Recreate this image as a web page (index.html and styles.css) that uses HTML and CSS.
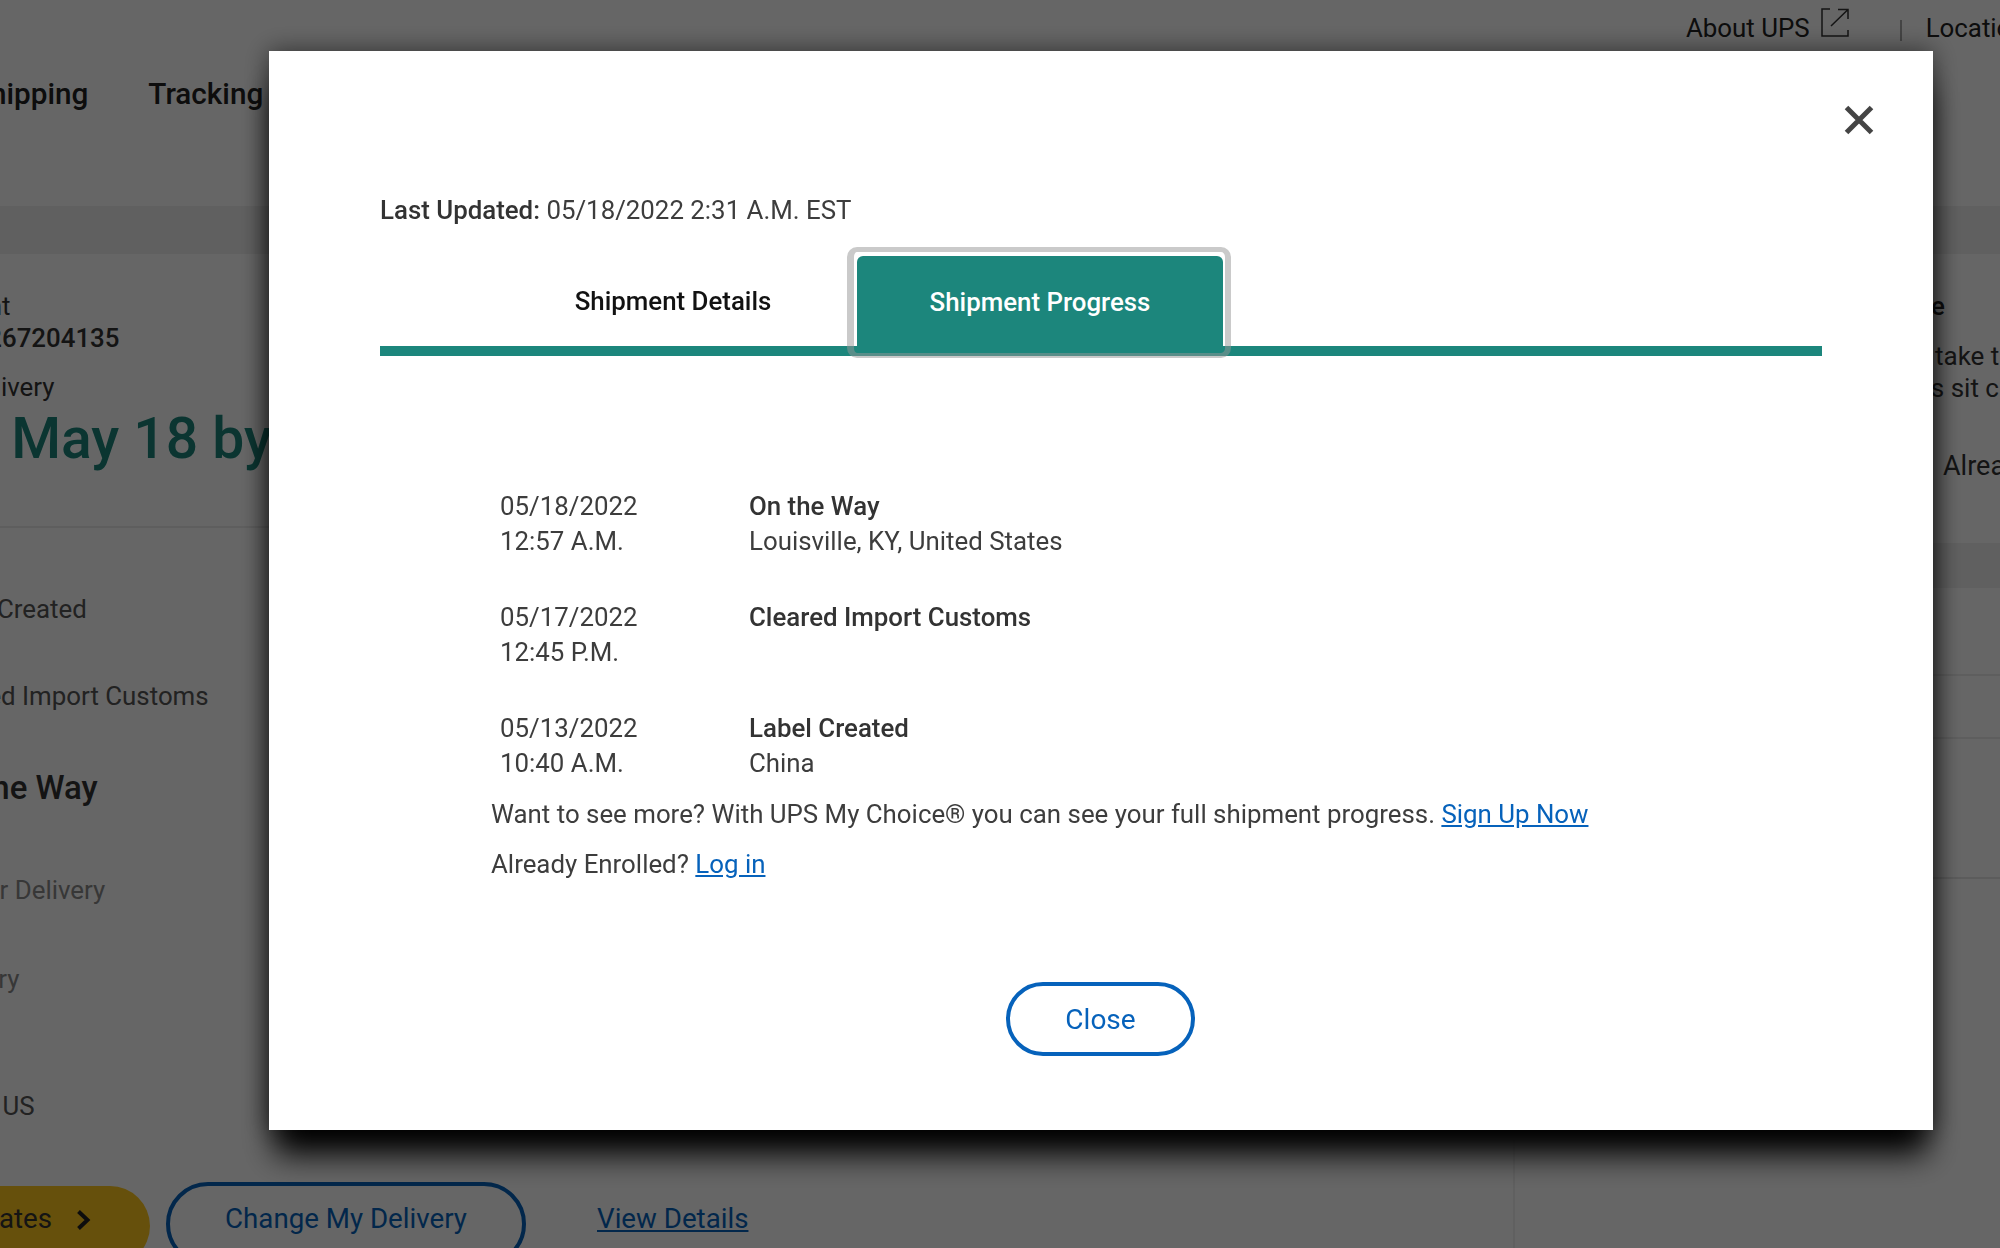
FILE: index.html
```html
<!DOCTYPE html>
<html lang="en">
<head>
<meta charset="utf-8">
<title>Shipment Progress</title>
<link rel="stylesheet" href="styles.css">
</head>
<body>
<div class="page">
  <header class="util">
    <span class="util-link">About UPS</span>
    <svg class="ext-icon" viewBox="0 0 28 29" aria-hidden="true"><path d="M9 1H1v27h26v-6M10 18 26.500 2M17 1.500h10V11" /></svg>
    <span class="util-sep"></span>
    <span class="util-link">Locations</span>
  </header>
  <nav class="nav">
    <span class="nav-item">Shipping</span>
    <span class="nav-item">Tracking</span>
  </nav>
  <div class="band"></div>
  <main class="content">
    <section class="left">
      <div class="summary">
        <p class="label">Shipment</p>
        <p class="number">1Z267204135</p>
        <p class="label label-gap">Delivery</p>
        <p class="eta">Wed May 18 by End of Day</p>
      </div>
      <ol class="steps">
        <li class="step step-created">Label Created</li>
        <li class="step step-customs">Cleared Import Customs</li>
        <li class="step step-way">On the Way</li>
        <li class="step step-muted step-out">Out for Delivery</li>
        <li class="step step-muted step-del">Delivery</li>
        <li class="step step-us">KY, US</li>
      </ol>
      <div class="actions">
        <span class="btn-yellow">Get Updates
          <svg class="chev" viewBox="0 0 15 22" aria-hidden="true"><path d="M2.500 2.500l9 8.500-9 8.500"/></svg>
        </span>
        <span class="btn-outline">Change My Delivery</span>
        <span class="view-link">View Details</span>
      </div>
    </section>
    <aside class="right">
      <div class="promo">
        <p class="promo-title">e</p>
        <p class="promo-text">take t</p>
        <p class="promo-text promo-text-second">es sit c</p>
        <p class="promo-foot">Already</p>
      </div>
      <div class="right-rows">
        <div class="rrow rrow-a"></div>
        <div class="rrow rrow-b"></div>
        <div class="rrow rrow-c"></div>
      </div>
    </aside>
  </main>
</div>

<div class="overlay">
  <div class="modal" role="dialog" aria-label="Shipment Progress">
    <svg class="close-x" viewBox="0 0 30 30" aria-label="Close"><path d="M2.500 2.500l25 25M27.500 2.500l-25 25"/></svg>
    <p class="updated"><strong>Last Updated:</strong> 05/18/2022 2:31 A.M. EST</p>
    <div class="tabs">
      <div class="tab">Shipment Details</div>
      <div class="tab tab-active">Shipment Progress</div>
    </div>
    <div class="history">
      <div class="row">
        <div>05/18/2022<br>12:57 A.M.</div>
        <div><strong>On the Way</strong><br>Louisville, KY, United States</div>
      </div>
      <div class="row">
        <div>05/17/2022<br>12:45 P.M.</div>
        <div><strong>Cleared Import Customs</strong></div>
      </div>
      <div class="row">
        <div>05/13/2022<br>10:40 A.M.</div>
        <div><strong>Label Created</strong><br>China</div>
      </div>
    </div>
    <p class="more">Want to see more? With UPS My Choice® you can see your full shipment progress. <a href="#">Sign Up Now</a></p>
    <p class="more more-second">Already Enrolled? <a href="#">Log in</a></p>
    <div class="modal-foot"><button class="close-btn" type="button">Close</button></div>
  </div>
</div>
</body>
</html>
```
FILE: styles.css
```css
* { box-sizing: border-box; }
html, body { margin: 0; padding: 0; height: 1248px; overflow: hidden; background: #fff; }
body { font-family: Roboto, "Liberation Sans", sans-serif; color: #333; font-size: 25.85px; }
p { margin: 0; }

.page { width: 2000px; height: 1248px; overflow: hidden; background: #fff; }

/* background page */
.util { height: 56px; display: flex; align-items: center; padding-left: 1686px; white-space: nowrap; color: #222; }
.util-link { line-height: 56px; flex: none; }
.ext-icon { flex: none; width: 28px; height: 29px; margin: -11px 0 0 11px; fill: none; stroke: #333; stroke-width: 1.5; }
.util-sep { flex: none; width: 2px; height: 21px; background: #aaa; margin: 5px 24px 0 51px; }

.nav { height: 152px; border-bottom: 2px solid #f0f0f0; display: flex; margin-left: -28px; gap: 60px; padding-top: 21px; font-size: 29.7px; font-weight: 500; color: #222; }
.nav-item { line-height: 34px; }

.band { height: 46px; background: #f0f0f0; }

.content { display: flex; height: 994px; }
.left { width: 1515px; flex: none; border-right: 2px solid #f0f0f0; }
.summary { height: 274px; padding-top: 36px; margin-left: -100px; border-bottom: 2px solid #ececec; width: 1615px; }
.label { line-height: 32px; color: #333; }
.label:first-child { padding-left: 1px; }
.number { line-height: 32px; font-weight: 500; padding-left: 57px; color: #333; }
.label-gap { margin-top: 17px; padding-left: 64px; }
.eta { font-size: 57px; line-height: 64px; font-weight: 500; color: #1c867c; margin: 4px 0 0 -15px; white-space: nowrap; }

.steps { list-style: none; margin: 0; padding: 65px 0 0; height: 654px; }
.step { line-height: 32px; color: #555; white-space: nowrap; }
.step-created { margin-left: -72px; }
.step-customs { margin: 55px 0 0 -72px; }
.step-way { margin: 56px 0 0 -69px; font-size: 33px; line-height: 40px; font-weight: 500; color: #333; }
.step-out { margin: 66px 0 0 -71px; }
.step-del { margin: 57px 0 0 -71px; }
.step-us { margin: 95px 0 0 -38px; }
.step-muted { color: #8a8a8a; }

.actions { display: flex; align-items: flex-start; white-space: nowrap; font-size: 27.7px; }
.btn-yellow { flex: none; margin: 4px 0 0 -100px; width: 250px; height: 80px; border-radius: 40px; background: #ffc81e; color: #333; display: flex; align-items: flex-start; justify-content: flex-end; padding-right: 59px; gap: 24px; line-height: 66px; }
.chev { width: 15px; height: 22px; fill: none; stroke: #222; stroke-width: 4; margin-top: 23px; }
.btn-outline { flex: none; margin-left: 16px; width: 360px; height: 84px; border: 4px solid #0662bb; border-radius: 42px; color: #0662bb; text-align: center; line-height: 66px; }
.view-link { margin-left: 71px; color: #0662bb; text-decoration: underline; line-height: 74px; }

.right { flex: 1; background: #f0f0f0; display: flex; flex-direction: column; }
.promo { height: 289px; padding-top: 36px; background: #fff; }
.promo-title { line-height: 32px; font-weight: 500; color: #222; margin-left: 416px; }
.promo-text { font-size: 26px; line-height: 32px; color: #333; margin: 18px 0 0 420px; white-space: nowrap; }
.promo-text-second { margin: 0 0 0 402px; }
.promo-foot { font-size: 27px; line-height: 32px; color: #333; margin: 46px 0 0 428px; white-space: nowrap; }
.right-rows { margin-top: 45px; background: #fff; flex: 1; }
.rrow { border-bottom: 2px solid #ececec; }
.rrow-a { height: 88px; }
.rrow-b { height: 63px; }
.rrow-c { height: 140px; border-bottom-color: #e6e6e6; }

/* overlay and dialog */
.overlay { position: fixed; inset: 0; background: rgba(0,0,0,.6); padding: 51px 0 0 269px; }
.modal { position: relative; width: 1664px; height: 1079px; background: #fff; padding: 142px 111px 0; box-shadow: 0 30px 30px -6px #000, 0 0 24px rgba(0,0,0,.55); display: flex; flex-direction: column; line-height: 35px; color: #3d3d3d; }
.modal strong { font-weight: 500; color: #333; }
.close-x { position: absolute; left: 1575px; top: 54px; width: 30px; height: 30px; fill: none; stroke: #444; stroke-width: 5; }
.updated { height: 35px; }

.tabs { display: grid; grid-template-columns: 370px 366px; margin-top: 28px; padding-left: 107px; height: 100px; border-bottom: 10px solid #1c867c; }
.tab { height: 90px; text-align: center; font-weight: 500; color: #121212; padding: 28px 0 0 2px; }
.tab-active { position: relative; height: 100px; background: #1c867c; color: #fff; border-radius: 6px 6px 0 0; padding: 29px 0 0; }
.tab-active::after { content: ""; position: absolute; left: -10px; right: -8px; top: -9px; bottom: -2px; border-style: solid; border-width: 5px 6px 5px 7px; border-color: rgba(150,150,150,.5); border-radius: 10px; }

.history { margin: 133px 0 0 120px; }
.row { display: grid; grid-template-columns: 249px 1fr; height: 111px; }
.more { margin: -25px 0 0 111px; }
.more-second { margin-top: 15px; }
.more a { color: #0662bb; text-decoration: underline; }
.modal-foot { display: flex; justify-content: center; margin: 100px 1px 0 0; }
.close-btn { width: 189px; height: 74px; border: 4px solid #0662bb; border-radius: 37px; background: #fff; color: #0662bb; font: 400 28px Roboto, sans-serif; }
```
